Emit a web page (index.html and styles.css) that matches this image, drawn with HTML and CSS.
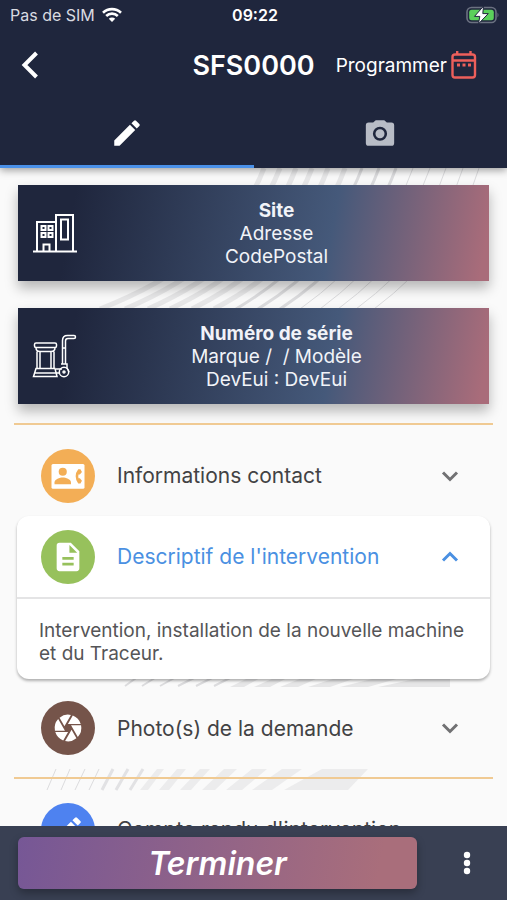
FILE: index.html
```html
<!DOCTYPE html>
<html lang="fr">
<head>
<meta charset="utf-8">
<meta name="viewport" content="width=device-width, initial-scale=1">
<title>SFS0000</title>
<link rel="stylesheet" href="styles.css">
</head>
<body>
<header class="top">
  <div class="status">
    <span class="carrier">Pas de SIM
      <svg width="20" height="16" viewBox="0 0 20 16" fill="none" stroke="#fff" stroke-width="2.6"><path d="M1 5.7a13 13 0 0 1 18 0M4.2 9a8.3 8.3 0 0 1 11.6 0"/><path d="M6.8 11.8a4.6 4.6 0 0 1 6.4 0L10 15z" fill="#fff" stroke="none"/></svg>
    </span>
    <span class="clock">09:22</span>
    <svg class="battery" width="34" height="18" viewBox="0 0 34 18"><rect x="1" y="1.5" width="29" height="15" rx="4.5" fill="none" stroke="#6b7181" stroke-width="1.6"/><rect x="3.2" y="3.7" width="24.6" height="10.6" rx="2.5" fill="#5bd05b"/><path d="M31.5 6.500q2 2.500 0 5z" fill="#6b7181"/><path d="M17.500.2L8.500 10.400h5.300L12.500 17.800l9.800-10.200h-5.500z" fill="#fff" stroke="#1f263d" stroke-width="1"/></svg>
  </div>
  <div class="bar">
    <button class="back" aria-label="Retour"><svg width="20" height="30" viewBox="0 0 20 30" fill="none" stroke="#fff" stroke-width="4"><path d="M16.500 3L4.500 15l12 12"/></svg></button>
    <h1>SFS0000</h1>
    <button class="schedule">Programmer
      <svg width="26" height="28" viewBox="0 0 26 28" fill="none" stroke="#ed5f5b" stroke-width="2.4"><rect x="1.500" y="3.500" width="22.500" height="23" rx="2.500"/><path d="M1.500 9.500H24M6.200 0v4M19.500 0v4"/><path d="M6 14h3M11.500 14h3M17 14h3" stroke-width="3"/></svg>
    </button>
  </div>
  <nav class="tabs">
    <button class="tab active" aria-label="Édition"><svg width="34" height="34" viewBox="0 0 24 24" fill="#fff"><path d="M3 17.250V21h3.750L17.810 9.940l-3.750-3.750zM20.710 7.040a1 1 0 0 0 0-1.410l-2.340-2.340a1 1 0 0 0-1.410 0l-1.830 1.830 3.750 3.750z"/></svg></button>
    <button class="tab" aria-label="Photos"><svg width="34" height="34" viewBox="0 0 24 24" fill="#b8bcc6"><path fill-rule="evenodd" d="M9 3L7.170 4.500H4a2 2 0 0 0-2 2V19a2 2 0 0 0 2 2h16a2 2 0 0 0 2-2V6.500a2 2 0 0 0-2-2h-3.170L15 3zm3 4.500a5 5 0 1 1 0 10 5 5 0 0 1 0-10zm0 1.800a3.200 3.200 0 1 0 0 6.400 3.200 3.200 0 0 0 0-6.400z"/></svg></button>
  </nav>
</header>

<main>
  <svg class="decor" viewBox="0 0 507 660" preserveAspectRatio="none" fill="none" stroke="#dcdcde" aria-hidden="true">
    <g stroke-width="5" stroke="#e7e7e8"><path d="M264 0Q230 90 100 141M280 0Q245 90 125 141M296 0Q262 90 148 141M312 0Q278 90 170 141M328 0Q295 90 192 141M345 0Q312 90 214 141"/></g>
    <g stroke-width="3"><path d="M362 0Q330 85 236 141M379 0Q348 85 258 141M396 0Q365 85 280 141"/></g>
    <g stroke-width="1"><path d="M413 0Q385 80 300 141M430 0Q402 80 320 141M446 0Q420 80 338 141M463 0Q438 80 356 141M479 0Q455 80 374 141"/></g>
    <g stroke-width="2"><path d="M125 518l14-10M142 518l16-10M160 518l18-10M178 518l20-10M196 518l20-10M214 518l20-10"/></g>
    <path fill="#e6e6e7" stroke="none" d="M230 519l18-9h12l-16 9zM254 519l20-9h13l-17 9zM280 519l22-9h16l-20 9zM308 519l28-9h20l-26 9zM340 519l36-9h24l-32 9zM378 519l42-9h30v9z"/>
    <g stroke-width="1"><path d="M47 622l9-21M61 622l9-21M75 622l10-21M89 622l10-21"/></g>
    <g stroke-width="3" stroke="#e2e2e4"><path d="M102 622l11-21M116 622l12-21M130 622l13-21"/></g>
    <path fill="#ececed" stroke="none" d="M140 622l17-21h7l-16 21zM159 622l18-21h9l-17 21zM180 622l20-21h10l-19 21zM202 622l22-21h13l-22 21zM226 622l26-21h15l-25 21zM252 622l30-21h20l-30 21zM284 622l38-21h46l-20 21z"/>
  </svg>

  <section class="cards">
    <article class="card">
      <svg width="46" height="40" viewBox="0 0 46 40" fill="none" stroke="#fff" stroke-width="2"><path d="M1 38.500h44M5 38V9h19M24 38V2h17v36M29 6.500h7v20h-7zM11.500 38v-6.500h6V38"/><path d="M9.500 13h4v4h-4zM16.500 13h4v4h-4zM9.500 20h4v4h-4zM16.500 20h4v4h-4z"/></svg>
      <p><strong>Site</strong><br>Adresse<br>CodePostal</p>
    </article>
    <article class="card">
      <svg width="46" height="44" viewBox="0 0 46 44" fill="none" stroke="#fff" stroke-width="1.500"><rect x="2.500" y="9" width="22" height="4.500" rx="1.500"/><path d="M4 13.500q0 4 4 4h11q4 0 4-4M5 17.500V34M22 17.500V34M8 18v16M19 18v16M4 34.500h19l2 8H1.500zM2.500 39h22"/><path d="M30.500 30V6.500q0-5 5-5H42q1.500 0 1.500 1.500T42 4.500h-6q-2.500 0-2.500 2.500v23zM30.500 14h3M29 30h6v4l2 4M24 35h6M24 39h3"/><circle cx="32" cy="38" r="4.700"/><circle cx="32" cy="38" r="1"/></svg>
      <p><strong>Numéro de série</strong><br>Marque / &nbsp;/ Modèle<br>DevEui : DevEui</p>
    </article>
  </section>

  <section class="panels">
    <button class="row" aria-expanded="false">
      <span class="dot orange"><svg width="36" height="36" viewBox="0 0 24 24"><rect x="1" y="4" width="22" height="16.500" rx="1" fill="#fff"/><g fill="#f3ae56"><circle cx="8.500" cy="9.200" r="2.700"/><path d="M3 17.500v-1.200c0-2.200 3.600-3.300 5.500-3.300s5.500 1.100 5.500 3.300v1.200z"/><path d="M20.300 17h-1.500a7.500 7.500 0 0 1 0-9.500h1.500l1 1.900-1.400 1.600h-.9a5 5 0 0 0 0 2.500h.9l1.400 1.600z"/></g></svg></span>
      <span class="label">Informations contact</span>
      <svg class="chev" width="18" height="12" viewBox="0 0 18 12"><path d="M2 2.500l7 7 7-7"/></svg>
    </button>
    <div class="open">
      <button class="row" aria-expanded="true">
        <span class="dot green"><svg width="34" height="34" viewBox="0 0 24 24" fill="#fff"><path d="M14 2H6a2 2 0 0 0-2 2v16a2 2 0 0 0 2 2h12a2 2 0 0 0 2-2V8zm2 16H8v-2h8zm0-4H8v-2h8zm-3-5V3.500L18.500 9z"/></svg></span>
        <span class="label">Descriptif de l'intervention</span>
        <svg class="chev" width="18" height="12" viewBox="0 0 18 12"><path d="M2 9.500l7-7 7 7"/></svg>
      </button>
      <p class="detail">Intervention, installation de la nouvelle machine et du Traceur.</p>
    </div>
    <button class="row" aria-expanded="false">
      <span class="dot brown"><svg width="32" height="32" viewBox="0 0 24 24" fill="#fff"><path d="M9.400 10.500l4.770-8.260a9.980 9.980 0 0 0-8.490 2.010l3.660 6.350zM21.540 9a10.060 10.060 0 0 0-5.940-6.310L11.940 9zM21.800 10h-7.490l.29.500 4.760 8.250A9.910 9.910 0 0 0 21.800 10zM8.540 12l-3.900-6.750A9.960 9.960 0 0 0 2.200 14h7.490zM2.460 15a10.060 10.060 0 0 0 5.940 6.310L12.060 15zM13.730 15l-3.900 6.760a9.980 9.980 0 0 0 8.490-2.010l-3.660-6.350z"/></svg></span>
      <span class="label">Photo(s) de la demande</span>
      <svg class="chev" width="18" height="12" viewBox="0 0 18 12"><path d="M2 2.500l7 7 7-7"/></svg>
    </button>
  </section>

  <section class="panels">
    <button class="row" aria-expanded="false">
      <span class="dot blue"><svg width="34" height="34" viewBox="0 0 24 24" fill="#fff"><path d="M3 17.250V21h3.750L17.810 9.940l-3.750-3.750zM20.710 7.040a1 1 0 0 0 0-1.410l-2.340-2.340a1 1 0 0 0-1.410 0l-1.830 1.830 3.750 3.750z"/></svg></span>
      <span class="label">Compte rendu d'intervention</span>
    </button>
  </section>
</main>

<footer class="actions">
  <button class="finish">Terminer</button>
  <button class="more" aria-label="Plus d'options"><svg width="8" height="24" viewBox="0 0 8 24" fill="#fff"><circle cx="4" cy="4" r="3.200"/><circle cx="4" cy="12" r="3.200"/><circle cx="4" cy="20" r="3.200"/></svg></button>
</footer>
</body>
</html>
```
FILE: styles.css
```css
* { box-sizing: border-box; }

body {
  margin: 0;
  height: 100vh;
  display: flex;
  flex-direction: column;
  overflow: hidden;
  background: #fafafa;
  color: #424244;
  font-family: Inter, "Liberation Sans", sans-serif;
}

button {
  margin: 0;
  padding: 0;
  border: 0;
  background: none;
  color: inherit;
  font: inherit;
}

svg { display: block; flex: none; }
h1, p { margin: 0; }

.top {
  flex: none;
  position: relative;
  z-index: 1;
  background: #1f263d;
  color: #fff;
  box-shadow: 0 2px 8px rgba(0, 0, 0, .4);
}

.status {
  display: grid;
  grid-template-columns: 1fr auto 1fr;
  align-items: center;
  height: 30px;
  padding: 0 7px 0 10px;
  font-size: 16px;
}

.carrier { display: flex; align-items: center; gap: 7px; color: #d9dbe1; }
.clock { font-weight: 600; }
.battery { justify-self: end; }

.bar {
  display: grid;
  grid-template-columns: 1fr auto 1fr;
  align-items: center;
  height: 70px;
  padding: 0 20px;
}

.back { justify-self: start; }
h1 { font-size: 27px; font-weight: 600; }

.schedule {
  justify-self: end;
  display: flex;
  align-items: center;
  gap: 4px;
  margin-right: 10px;
  font-size: 19px;
}

.tabs { display: flex; height: 68px; }

.tab {
  flex: 1;
  display: flex;
  align-items: center;
  justify-content: center;
  border-bottom: 3px solid transparent;
}

.tab.active { border-color: #4a90e8; }

main {
  flex: 1;
  min-height: 0;
  position: relative;
  overflow: hidden;
  padding: 17px 14px 0;
}

.decor {
  position: absolute;
  inset: 0 0 auto;
  width: 100%;
  height: 660px;
}

.cards {
  position: relative;
  display: grid;
  gap: 27px;
  padding: 0 4px 19px;
}

.card {
  display: grid;
  grid-template-columns: 46px 1fr;
  align-items: center;
  height: 96px;
  padding: 0 14px;
  background: linear-gradient(100deg, #1f263d 12%, #45597a 66%, #a96c7a 98%);
  box-shadow: 0 7px 12px rgba(0, 0, 0, .28);
  color: #f1f3f8;
  font-size: 19px;
  line-height: 23px;
  text-align: center;
}

.card strong { font-weight: 700; }

.panels {
  position: relative;
  border-top: 2px solid #f0ca93;
  padding: 10px 3px 0;
}

.row {
  display: flex;
  align-items: center;
  width: 100%;
  height: 81px;
  padding: 0 31px 0 24px;
  font-size: 21px;
  text-align: left;
}

.dot {
  display: flex;
  align-items: center;
  justify-content: center;
  width: 54px;
  height: 54px;
  margin-right: 22px;
  border-radius: 50%;
}

.orange { background: #f3ae56; }
.green { background: #97c15c; }
.brown { background: #75544a; }
.blue { background: #4e82f0; }

.label { flex: 1; white-space: nowrap; }
.chev { fill: none; stroke: #717173; stroke-width: 3; }

.open {
  background: #fff;
  border-radius: 12px;
  box-shadow: 0 2px 3px rgba(0, 0, 0, .3);
}

.open .row { color: #4a90e2; }
.open .chev { stroke: #4a90e2; }

.detail {
  border-top: 2px solid #e4e4e5;
  padding: 20px 22px 14px;
  font-size: 19px;
  line-height: 23px;
  color: #555557;
}

.open + .row { height: 98px; }

.actions {
  flex: none;
  position: relative;
  display: flex;
  align-items: center;
  height: 74px;
  padding-left: 18px;
  background: #394053;
  color: #fff;
}

.finish {
  flex: 1;
  height: 52px;
  border-radius: 6px;
  background: linear-gradient(100deg, #765796, #a96e7b 90%);
  box-shadow: 0 4px 8px rgba(0, 0, 0, .3);
  font-size: 32px;
  font-style: italic;
  font-weight: 600;
}

.more {
  display: flex;
  justify-content: center;
  width: 90px;
  padding-left: 10px;
}
```
